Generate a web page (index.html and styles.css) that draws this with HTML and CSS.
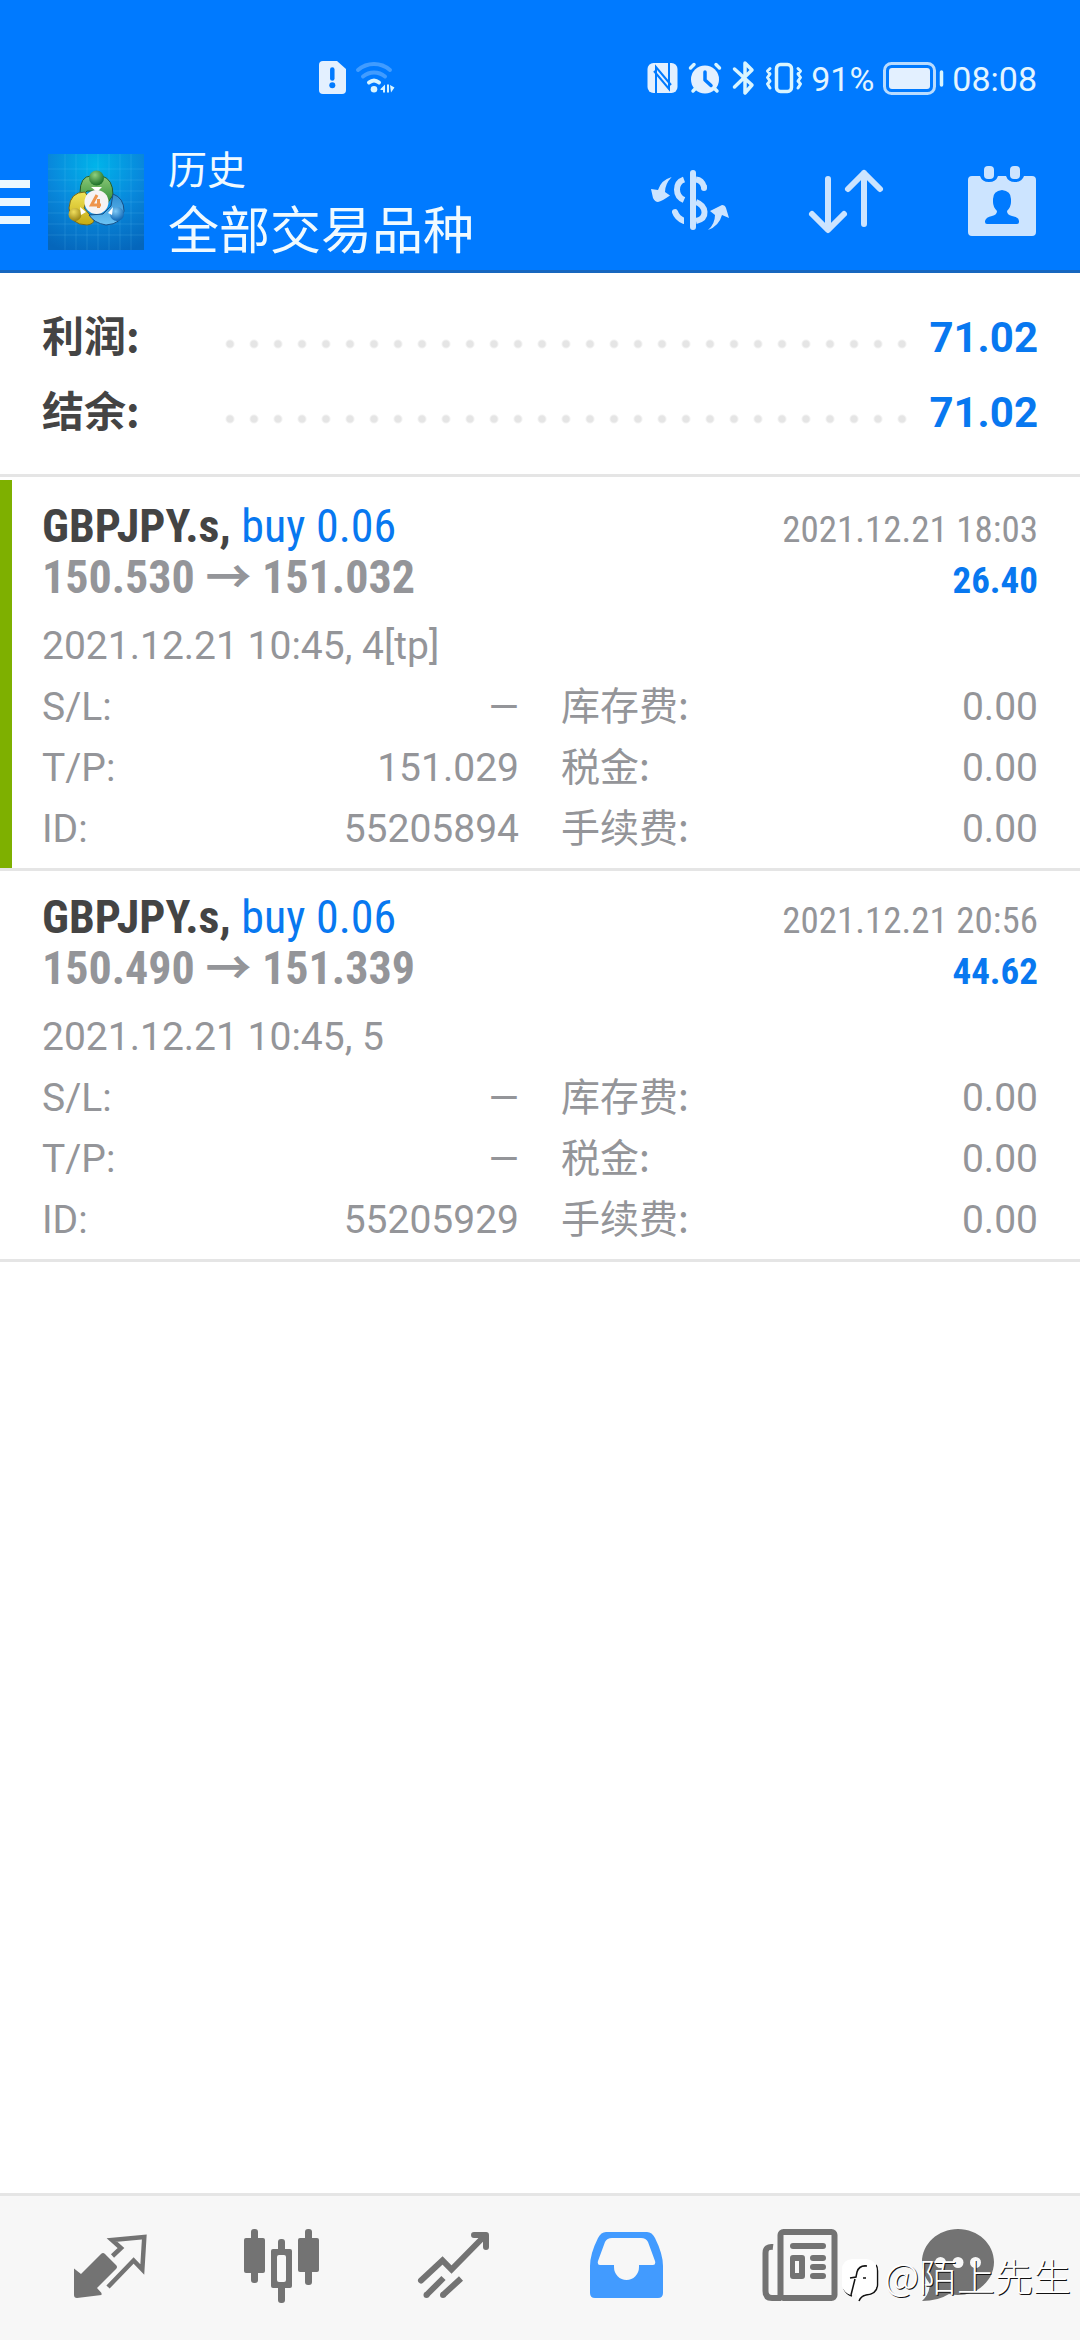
FILE: index.html
```html
<!DOCTYPE html>
<html lang="zh-CN">
<head>
<meta charset="utf-8">
<meta name="viewport" content="width=device-width, initial-scale=1">
<title>历史</title>
<link rel="stylesheet" href="styles.css">
</head>
<body>
<div class="status">
  <svg class="status-left" width="84" height="50" viewBox="0 0 84 50" aria-hidden="true">
    <path fill="#e3f0ff" d="M7 7H21L30 15V36Q30 40 26 40H7Q3 40 3 36V11Q3 7 7 7Z"/>
    <path d="M16.300 15.500V24.500" stroke="#007aff" stroke-width="4.500" stroke-linecap="round"/>
    <circle cx="16.300" cy="31.300" r="3" fill="#007aff"/>
    <g fill="none" stroke-width="4" stroke-linecap="round">
      <path d="M42 16Q49 10 58 10T74 16" stroke="#419cff"/>
      <path d="M47 22.500Q52 18.500 58 18.500T69 22.500" stroke="#419cff"/>
      <path d="M53 28.500Q58 24.500 63 28.500" stroke="#d9f5ff"/>
    </g>
    <circle cx="58" cy="35.300" r="3.300" fill="#d9f5ff"/>
    <path fill="#d9f5ff" d="M64.500 35L69 30.500V38.500H67V36H64.500ZM71 30.500H73V38.500H71ZM74 31L78.500 33.500L75 38.500Z"/>
  </svg>
  <div class="status-right">
    <svg width="160" height="50" viewBox="0 0 160 50" aria-hidden="true">
      <rect x="3.500" y="9" width="30" height="30" rx="6" fill="#e3f0ff"/>
      <path d="M12 39V13L27 31M25 9V35L10 17" fill="none" stroke="#007aff" stroke-width="2"/>
      <circle cx="61" cy="25.500" r="14" fill="#e3f0ff"/>
      <g fill="none" stroke="#d9f5ff" stroke-width="3.500" stroke-linecap="round" stroke-linejoin="round">
        <path d="M46.500 14L50 10.500M72 10.500L75.500 14M49 37L51.500 34.500M70.500 34.500L73 37"/>
        <path d="M61 18V26L67 31.500" stroke="#007aff"/>
        <path d="M90.500 15L108 31L101 39V9L108 16L90.500 33"/>
        <rect x="132.500" y="10.500" width="15" height="27" rx="4"/>
        <path stroke-width="3" d="M126 14.500L123.500 17L126 20L123.500 23.500L126 27L123.500 30L126 34M154 14.500L156.500 17L154 20L156.500 23.500L154 27L156.500 30L154 34"/>
      </g>
    </svg>
    <span class="status-text">91%</span>
    <svg width="64" height="50" viewBox="0 0 64 50" aria-hidden="true">
      <rect x="3.500" y="9.500" width="50" height="30" rx="7" fill="none" stroke="#b9dcff" stroke-width="3"/>
      <rect x="8" y="14" width="41" height="21" rx="3" fill="#e3f0ff"/>
      <path d="M60.500 18V31" stroke="#d9f5ff" stroke-width="3.500" stroke-linecap="round"/>
    </svg>
    <time class="status-text">08:08</time>
  </div>
</div>
<header class="header">
  <button class="menu" aria-label="菜单">
    <svg width="30" height="44" viewBox="0 0 30 44"><path fill="#ebf8ff" d="M0 0H30V8H0ZM0 18H30V26H0ZM0 36H30V44H0Z"/></svg>
  </button>
  <svg class="logo" width="96" height="96" viewBox="0 0 96 96" aria-hidden="true">
    <defs>
      <radialGradient id="sky" cx=".5" cy=".12" r=".95"><stop offset="0" stop-color="#00b4ea"/><stop offset=".5" stop-color="#0889dc"/><stop offset="1" stop-color="#0566bb"/></radialGradient>
      <linearGradient id="green" x1="0" y1="0" x2="0" y2="1"><stop offset="0" stop-color="#8cc878"/><stop offset="1" stop-color="#2f8e35"/></linearGradient>
      <linearGradient id="yellow" x1="0" y1="0" x2="0" y2="1"><stop offset="0" stop-color="#f0e45a"/><stop offset="1" stop-color="#c6ab12"/></linearGradient>
      <linearGradient id="blue" x1="0" y1="0" x2="0" y2="1"><stop offset="0" stop-color="#2f8cd0"/><stop offset="1" stop-color="#6cc4f5"/></linearGradient>
      <radialGradient id="greenBall" cx=".4" cy=".3" r=".7"><stop offset="0" stop-color="#8fd07f"/><stop offset="1" stop-color="#1b6f28"/></radialGradient>
      <radialGradient id="yellowBall" cx=".4" cy=".3" r=".7"><stop offset="0" stop-color="#f0de5e"/><stop offset="1" stop-color="#9a8413"/></radialGradient>
      <radialGradient id="blueBall" cx=".4" cy=".3" r=".7"><stop offset="0" stop-color="#7fcaf7"/><stop offset="1" stop-color="#0f66b4"/></radialGradient>
    </defs>
    <rect width="96" height="96" fill="url(#sky)"/>
    <path d="M17 0V96M28 0V96M39 0V96M50 0V96M61 0V96M72 0V96M83 0V96M0 15H96M0 26H96M0 37H96M0 48H96M0 59H96M0 70H96M0 81H96" stroke="#7fd4ff" stroke-opacity=".16" fill="none"/>
    <path d="M32 39Q32 22 43 22H54Q65 25 65 41L59 50L49 37L39 37L34 42Z" fill="url(#green)" stroke="#245c2c"/>
    <path d="M37 38Q22 38 21 54Q22 71 39 71Q46 70 46 66L36 54L40 43Z" fill="url(#yellow)" stroke="#74681b"/>
    <path d="M65 40Q76 44 76 57Q74 70 58 71Q46 69 41 61L55 60L63 52Z" fill="url(#blue)" stroke="#174f86"/>
    <circle cx="48.500" cy="24" r="7.500" fill="url(#greenBall)"/>
    <circle cx="27" cy="60.500" r="6.500" fill="url(#yellowBall)"/>
    <circle cx="69" cy="60" r="7" fill="url(#blueBall)"/>
    <path d="M43 33H54L49 38ZM32 53L38 58L33 61ZM65 53L60 59L64 61Z" fill="#fff"/>
    <circle cx="48.500" cy="48" r="12" fill="#f5f3f4"/>
    <path d="M49 41L43.500 51H53M50.500 45V54" fill="none" stroke="#ee954d" stroke-width="3"/>
  </svg>
  <div class="heading">
    <p class="heading-sub">历史</p>
    <h1 class="heading-main">全部交易品种</h1>
  </div>
  <div class="actions">
    <button class="action" aria-label="货币">
      <svg width="96" height="96" viewBox="0 0 96 96">
        <path fill="#cce4ff" d="M29.700 23Q19 26 16 36L9 35L11 44Q13 48 16 48Q20 47 28 41.500L23 38Q23 30 29.700 23ZM66 76Q73 70 73 61L68 57L80 51Q83 51 84 54L87 64L80 61Q77 72 66 76Z"/>
        <g fill="none" stroke="#cce4ff" stroke-width="6">
          <path d="M42 25.500Q35 28 35 35.500T42 46M54 25.500Q60 26 62 33M54 48Q62 51 62.500 58T54 67"/>
          <path d="M51 19V73M33 58Q35 64 42 67" stroke-linecap="round"/>
          <path d="M62 33V34" stroke-linecap="round"/>
        </g>
        <path d="M42 60H48V72H42Z" fill="#007aff"/>
      </svg>
    </button>
    <button class="action" aria-label="排序">
      <svg width="96" height="96" viewBox="0 0 96 96"><path d="M30 25V75M14 60L30 76L46 60M66 70V19M50 35L66 19L82 35" fill="none" stroke="#cce4ff" stroke-width="6" stroke-linecap="round" stroke-linejoin="round"/></svg>
    </button>
    <button class="action" aria-label="选择日期">
      <svg width="96" height="96" viewBox="0 0 96 96">
        <path fill="#cce4ff" d="M18 22H26Q28 28 35 28T44 22H52Q54 28 61 28T70 22H78Q82 22 82 26V78Q82 82 78 82H18Q14 82 14 78V26Q14 22 18 22Z"/>
        <rect x="30" y="12" width="10" height="13" rx="4" fill="#cce4ff"/><rect x="56" y="12" width="10" height="13" rx="4" fill="#cce4ff"/>
        <path fill="#007aff" d="M48 36Q57 37 57 45V48Q57 53 53 57Q53 61 58 62Q65 63 65 67V68Q65 70 63 70H33Q31 70 31 68V67Q32 63 38 62Q43 61 43 57Q39 53 39 48V45Q39 37 48 36Z"/>
      </svg>
    </button>
  </div>
</header>
<main class="main">
  <dl class="summary">
    <div class="summary-row"><dt class="summary-label">利润:</dt><dd class="summary-value">71.02</dd></div>
    <div class="summary-row"><dt class="summary-label">结余:</dt><dd class="summary-value">71.02</dd></div>
  </dl>
  <ul class="deals">
    <li class="deal">
      <article class="deal-body deal-tp">
        <div class="deal-line"><h2 class="deal-title">GBPJPY.s, <span class="deal-side">buy 0.06</span></h2><time class="deal-time">2021.12.21 18:03</time></div>
        <div class="deal-line"><span class="deal-prices">150.530 → 151.032</span><span class="deal-profit">26.40</span></div>
        <p class="deal-open">2021.12.21 10:45, 4[tp]</p>
        <dl class="details">
          <div class="detail"><dt>S/L:</dt><dd>—</dd></div>
          <div class="detail"><dt class="cjk">库存费:</dt><dd>0.00</dd></div>
          <div class="detail"><dt>T/P:</dt><dd>151.029</dd></div>
          <div class="detail"><dt class="cjk">税金:</dt><dd>0.00</dd></div>
          <div class="detail"><dt>ID:</dt><dd>55205894</dd></div>
          <div class="detail"><dt class="cjk">手续费:</dt><dd>0.00</dd></div>
        </dl>
      </article>
    </li>
    <li class="deal">
      <article class="deal-body">
        <div class="deal-line"><h2 class="deal-title">GBPJPY.s, <span class="deal-side">buy 0.06</span></h2><time class="deal-time">2021.12.21 20:56</time></div>
        <div class="deal-line"><span class="deal-prices">150.490 → 151.339</span><span class="deal-profit">44.62</span></div>
        <p class="deal-open">2021.12.21 10:45, 5</p>
        <dl class="details">
          <div class="detail"><dt>S/L:</dt><dd>—</dd></div>
          <div class="detail"><dt class="cjk">库存费:</dt><dd>0.00</dd></div>
          <div class="detail"><dt>T/P:</dt><dd>—</dd></div>
          <div class="detail"><dt class="cjk">税金:</dt><dd>0.00</dd></div>
          <div class="detail"><dt>ID:</dt><dd>55205929</dd></div>
          <div class="detail"><dt class="cjk">手续费:</dt><dd>0.00</dd></div>
        </dl>
      </article>
    </li>
  </ul>
</main>
<nav class="tabs">
  <a class="tab" href="#quotes" aria-label="行情">
    <svg width="96" height="96" viewBox="0 0 96 96"><path d="M12 48.500L19 54L39 34Q41 32 43 34L54 45Q56 47 54 49L35 68L39.500 73V75L15 78Q12 78 12 75Z" fill="currentColor"/><path d="M50.500 36L59 28L50 20L82.300 17L80.300 49.500L71.600 40.500L46 67" fill="none" stroke="currentColor" stroke-width="4.500"/></svg>
  </a>
  <a class="tab" href="#charts" aria-label="图表">
    <svg width="96" height="96" viewBox="0 0 96 96"><g fill="currentColor"><rect x="10" y="18" width="21" height="35" rx="2"/><rect x="17" y="9" width="7" height="54" rx="3"/><rect x="64" y="18" width="21" height="34" rx="2"/><rect x="71" y="9" width="7" height="56" rx="3"/><rect x="37" y="29" width="21" height="39" rx="2"/><rect x="44" y="19" width="7" height="64" rx="3"/></g><rect x="43" y="35" width="9" height="27" rx="2" fill="#f7f7f7"/></svg>
  </a>
  <a class="tab" href="#trade" aria-label="交易">
    <svg width="96" height="96" viewBox="0 0 96 96"><g fill="none" stroke="currentColor" stroke-width="6"><path d="M15 60.500L36.500 40.500L45.500 49.500L79 15.500" stroke-linecap="round"/><path d="M68 15H80V27" stroke-linecap="round" stroke-linejoin="round"/><path d="M37.500 58L20.500 75M55 58.500L37 75"/></g><g fill="currentColor"><circle cx="20.500" cy="75" r="3"/><circle cx="37" cy="75" r="3"/></g></svg>
  </a>
  <a class="tab tab-active" href="#history" aria-label="历史">
    <svg width="96" height="96" viewBox="0 0 96 96"><path fill="currentColor" fill-rule="evenodd" d="M12 46Q12 34 20 18Q23 12 28 12H69Q74 12 77 18Q85 34 85 46V73Q85 78 80 78H17Q12 78 12 73ZM34 18Q29 18 27 22L20 41Q19 45 22 45H36V47A12.500 13 0 0 0 61 47V45H75Q78 45 77 41L70 22Q68 18 63 18Z"/></svg>
  </a>
  <a class="tab" href="#news" aria-label="新闻">
    <svg width="96" height="96" viewBox="0 0 96 96"><g fill="none" stroke="currentColor" stroke-width="6"><rect x="30.500" y="12" width="54" height="66" rx="3"/><path d="M23 27Q15.500 26 15.500 33V71Q15.500 78 22 78H31"/></g><g fill="currentColor"><rect x="40" y="23" width="36" height="6" rx="3"/><path fill-rule="evenodd" d="M43 35H52Q55 35 55 38V56Q55 59 52 59H43Q40 59 40 56V38Q40 35 43 35ZM45 41V53H49V41Z"/><rect x="60" y="35" width="16" height="6" rx="3"/><rect x="60" y="44" width="16" height="6" rx="3"/><rect x="60" y="53" width="16" height="6" rx="3"/></g></svg>
  </a>
  <a class="tab" href="#messages" aria-label="消息">
    <svg width="96" height="96" viewBox="0 0 96 96"><path fill="currentColor" d="M36 9C56 9 72 24 72 42S56 75 36 75Q31 75 27 74Q16 81 0 81Q7 75 8 64Q0 54 0 42C0 24 16 9 36 9Z"/><g fill="#f7f7f7"><circle cx="18.500" cy="42.500" r="5.500"/><circle cx="36" cy="42.500" r="5.500"/><circle cx="53.500" cy="42.500" r="5.500"/></g></svg>
  </a>
</nav>
<div class="signature">
  <svg width="42" height="48" viewBox="0 0 42 48" aria-hidden="true">
    <path d="M37 9Q38.500 11 38.500 15V29Q38 38 27 39Q22 40 20 45M5 33Q8 39 13 40" fill="none" stroke="#111" stroke-width="1.500"/>
    <path fill="#fff" d="M13 3H27Q37.500 4 37.500 13V28Q37.500 37 27 38Q20 39 19 44L17 37L12 39Q5 37 3 30V14Q3 4 13 3Z"/>
    <path d="M28 10Q20 9 18 16L17 21L11 22M16 23L12 39M24 22H27" fill="none" stroke="#111" stroke-width="1.500"/>
  </svg>
  <span>@陌上先生</span>
</div>
</body>
</html>
```
FILE: styles.css
```css
* {
  box-sizing: border-box;
}

body {
  position: relative;
  display: flex;
  flex-direction: column;
  min-height: 100vh;
  margin: 0;
  background: #fff;
  color: #949599;
  font-family: Roboto, "Noto Sans CJK SC", sans-serif;
  font-size: 39px;
}

h1, h2, p, dl, dd, ul {
  margin: 0;
  padding: 0;
}

button {
  margin: 0;
  padding: 0;
  border: 0;
  background: none;
}

svg {
  display: block;
}

/* Status bar */

.status {
  display: flex;
  justify-content: space-between;
  padding: 54px 43px 28px 316px;
  background: #007aff;
}

.status-right {
  display: flex;
  align-items: center;
  gap: 7px;
}

.status-text {
  color: #e3f5ff;
  font-size: 34px;
  line-height: 50px;
}

/* Header */

.header {
  display: flex;
  align-items: center;
  padding: 5px 30px 4px 0;
  border-bottom: 3px solid #1767bf;
  background: #007aff;
}

.logo {
  margin: 0 24px 0 18px;
}

.heading {
  flex: 1;
  padding-bottom: 9px;
  color: #f0faff;
  font-family: "Noto Sans CJK SC", sans-serif;
  line-height: 60px;
}

.heading-sub {
  font-size: 39px;
}

.heading-main {
  font-size: 51px;
  font-weight: 400;
}

.actions {
  display: flex;
  gap: 60px;
}

/* Summary */

.main {
  flex: 1;
}

.summary {
  padding: 27px 42px 24px;
  border-bottom: 3px solid #e5e5e5;
  font-size: 42px;
  font-weight: 700;
}

.summary-row {
  display: flex;
  align-items: baseline;
  line-height: 75px;
}

.summary-row::after {
  content: "";
  flex: 1;
  order: 1;
  align-self: stretch;
  margin-right: 15px;
  background: radial-gradient(circle at 12px 44px, #e5e5e5 3px, transparent 5px) 0 0 / 24px 75px repeat-x;
}

.summary-label {
  width: 176px;
  color: #444;
  font-family: "Noto Sans CJK SC", sans-serif;
  line-height: 66px;
}

.summary-value {
  order: 2;
  color: #0878f0;
}

/* Deals */

.deals {
  padding-top: 3px;
  list-style: none;
}

.deal {
  border-bottom: 3px solid #e5e5e5;
}

.deal-body {
  padding: 21px 42px 8px 30px;
  border-left: 12px solid transparent;
}

.deal-tp {
  border-left-color: #7eb000;
}

.deal-line {
  display: flex;
  align-items: baseline;
  justify-content: space-between;
  font-family: "Roboto Condensed", "Liberation Sans Narrow", Roboto, "Noto Sans CJK SC", sans-serif;
  line-height: 51px;
}

.deal-title,
.deal-prices {
  font-size: 46px;
  font-weight: 700;
}

.deal-title {
  color: #444;
}

.deal-side {
  color: #0878f0;
  font-weight: 400;
}

.deal-time,
.deal-profit {
  font-size: 37px;
  line-height: 45px;
}

.deal-profit {
  color: #0878f0;
  font-weight: 700;
}

.deal-open {
  margin-top: 13px;
  line-height: 61px;
}

.details {
  display: grid;
  grid-template-columns: 1fr 1fr;
  column-gap: 42px;
}

.detail {
  display: flex;
  align-items: baseline;
  justify-content: space-between;
  line-height: 61px;
}

.cjk {
  font-family: "Noto Sans CJK SC", sans-serif;
  line-height: 53px;
}

/* Bottom tabs */

.tabs {
  display: flex;
  padding: 24px;
  border-top: 3px solid #e5e5e5;
  background: #f7f7f7;
}

.tab {
  display: flex;
  flex: 1;
  justify-content: center;
  color: #737373;
}

.tab-active {
  color: #429bff;
}

/* Author mark laid over the tab bar */

.signature {
  position: absolute;
  right: 9px;
  bottom: 36px;
  display: flex;
  gap: 3px;
  color: #fff;
  font-family: "Noto Sans CJK SC", sans-serif;
  font-size: 38px;
  font-weight: 300;
  line-height: 38px;
  text-shadow: 1px 1px 0 #111;
}
```
